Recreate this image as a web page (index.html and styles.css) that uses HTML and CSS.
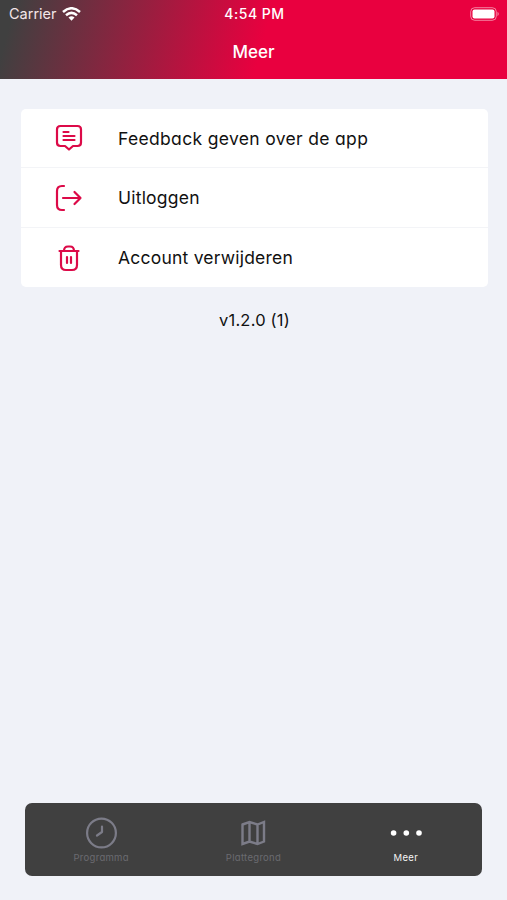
FILE: index.html
```html
<!DOCTYPE html>
<html lang="nl">
<head>
<meta charset="utf-8">
<title>Meer</title>
<link rel="stylesheet" href="styles.css">
</head>
<body>
<header class="header">
  <div class="status">
    <div class="carrier"><span class="carrier-name">Carrier</span>
      <svg class="wifi" width="19" height="14" viewBox="0 0 19 14" fill="none" stroke="#fff" stroke-width="2.500"><path d="M1 5Q9.500-2.500 18 5M4 8.300Q9.500 3.500 15 8.300"/><path d="M6.500 10.500Q9.500 8 12.500 10.500L9.500 13.700Z" fill="#fff" stroke="none"/></svg>
    </div>
    <span class="time">4:54 PM</span>
    <svg class="battery" width="31" height="14" viewBox="0 0 31 14"><rect x="1.700" y=".7" width="25.600" height="12.600" rx="4" fill="none" stroke="#fff" stroke-opacity=".5"/><rect x="3.500" y="2.500" width="22" height="9" rx="2" fill="#fff"/><path d="M28.500 4.800Q31 7 28.500 9.200Z" fill="#fff" fill-opacity=".55"/></svg>
  </div>
  <h1 class="title">Meer</h1>
</header>
<main class="content">
  <ul class="menu">
    <li class="row">
      <svg class="icon" width="28" height="28" viewBox="0 0 28 28"><path d="M5.500 2H22.500Q26 2 26 5.500V18.500Q26 22 22.500 22H18L14 25.500L10 22H5.500Q2 22 2 18.500V5.500Q2 2 5.500 2ZM8.500 8H13.500M8.500 12H19.500M8.500 16H19.500"/></svg>
      <span class="label feedback">Feedback geven over de app</span>
    </li>
    <li class="row">
      <svg class="icon" width="28" height="28" viewBox="0 0 28 28"><path d="M9 2H7Q2 2 2 7V21Q2 26 7 26H9M8 14H25.500M19.500 8L25.500 14L19.500 20"/></svg>
      <span class="label">Uitloggen</span>
    </li>
    <li class="row">
      <svg class="icon" width="28" height="28" viewBox="0 0 28 28"><path d="M4.500 7H23.500M6 7V21Q6 26 11 26H17Q22 26 22 21V7M9 7Q9 2.500 13 2.500H15Q19 2.500 19 7M12 13V19M16 13V19"/></svg>
      <span class="label">Account verwijderen</span>
    </li>
  </ul>
  <p class="version">v1.2.0 (1)</p>
</main>
<nav class="tabs">
  <a class="tab"><svg width="32" height="32" viewBox="0 0 32 32" fill="none" stroke="#7c7c88" stroke-width="2.200" stroke-linecap="round" stroke-linejoin="round"><circle cx="16.500" cy="16" r="14.400"/><path d="M17 9.500V15L12 18.500"/></svg><span class="tab-label">Programma</span></a>
  <a class="tab"><svg width="32" height="32" viewBox="0 0 32 32" fill="none" stroke="#7c7c88" stroke-width="2.400"><path d="M5.500 7.500L12.500 5L20.500 7.500L27 5V24.500L20.500 27L12.500 24.500L5.500 27ZM12.500 5V24.500M20.500 7.500V27"/></svg><span class="tab-label">Plattegrond</span></a>
  <a class="tab active"><svg width="32" height="32" viewBox="0 0 32 32" fill="#fff"><circle cx="3.600" cy="16" r="2.800"/><circle cx="16.300" cy="16" r="2.800"/><circle cx="29" cy="16" r="2.800"/></svg><span class="tab-label">Meer</span></a>
</nav>
</body>
</html>
```
FILE: styles.css
```css
* { box-sizing: border-box; }
body {
  margin: 0;
  height: 900px;
  display: flex;
  flex-direction: column;
  background: #f0f2f8;
  color: #111;
  font-family: Inter, "Liberation Sans", sans-serif;
  font-feature-settings: "cv11";
}
.header {
  height: 79px;
  color: #fff;
  background: linear-gradient(105deg, #404040 3%, #e9003f 52%);
}
.status {
  height: 27px;
  padding: 0 7px 0 9px;
  display: grid;
  grid-template-columns: 1fr auto 1fr;
  align-items: center;
  font-feature-settings: normal;
}
.carrier { display: flex; align-items: center; gap: 5px; }
.carrier-name { font-size: 14.500px; color: #f3e6e8; }
.time { font-size: 14px; font-weight: 500; letter-spacing: 0.500px; }
.battery { justify-self: end; }
.title {
  margin: 0;
  height: 50px;
  line-height: 50px;
  text-align: center;
  font-size: 17px;
  font-weight: 500;
}
.content { flex: 1; padding: 30px 19px 0 21px; }
.menu {
  margin: 0;
  padding: 0;
  list-style: none;
  background: #fff;
  border-radius: 5px;
  overflow: hidden;
}
.row { height: 58px; display: flex; align-items: center; padding-left: 34px; }
.row + .row { height: 60px; border-top: 1px solid #f3f4f7; }
.icon {
  margin: 0 34.600px 0 0.400px;
  fill: none;
  stroke: #dc0a48;
  stroke-width: 2.200;
  stroke-linecap: round;
  stroke-linejoin: round;
}
.label { font-size: 17.500px; letter-spacing: 0.220px; white-space: nowrap; }
.feedback { letter-spacing: 0.330px; }
.version { margin: 22px 0 0; text-align: center; font-size: 16.500px; line-height: 22px; letter-spacing: 0.200px; }
.tabs {
  height: 73px;
  margin: 0 25px 24px;
  padding-top: 14px;
  display: grid;
  grid-template-columns: repeat(3, 1fr);
  background: #404040;
  border-radius: 7px;
}
.tab { display: flex; flex-direction: column; align-items: center; }
.tab-label { margin-top: 3px; font-size: 9.500px; line-height: 12px; color: #6b6b70; letter-spacing: 0.300px; }
.active .tab-label { color: #f4f4f4; }
```
